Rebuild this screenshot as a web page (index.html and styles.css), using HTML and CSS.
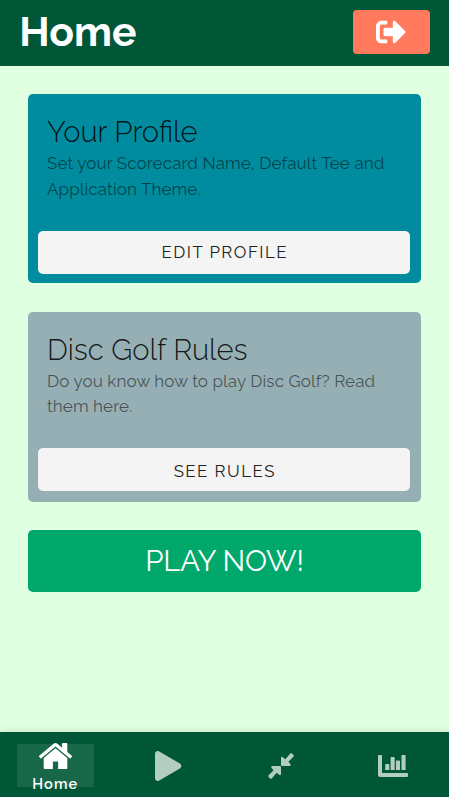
FILE: index.html
```html
<!DOCTYPE html>
<html lang="en">
<head>
<meta charset="utf-8">
<title>Home</title>
<link rel="stylesheet" href="styles.css">
</head>
<body>
<div class="app">
  <header class="header">
    <h1>Home</h1>
    <button class="logout" aria-label="Log out">
      <svg width="30" height="30" viewBox="0 0 512 512"><path d="M497 273L329 441c-15 15-41 4.500-41-17v-96H152c-13.300 0-24-10.700-24-24v-96c0-13.300 10.700-24 24-24h136V88c0-21.400 25.900-32 41-17l168 168c9.300 9.400 9.300 24.600 0 34zM192 436v-40c0-6.600-5.400-12-12-12H96c-17.700 0-32-14.300-32-32V160c0-17.700 14.300-32 32-32h84c6.600 0 12-5.400 12-12V76c0-6.600-5.400-12-12-12H96c-53 0-96 43-96 96v192c0 53 43 96 96 96h84c6.600 0 12-5.400 12-12z"/></svg>
    </button>
  </header>
  <main class="main">
    <section class="card profile">
      <h2>Your Profile</h2>
      <p>Set your Scorecard Name, Default Tee and Application Theme.</p>
      <button class="action">EDIT PROFILE</button>
    </section>
    <section class="card rules">
      <h2>Disc Golf Rules</h2>
      <p>Do you know how to play Disc Golf? Read them here.</p>
      <button class="action">SEE RULES</button>
    </section>
    <button class="play">PLAY NOW!</button>
  </main>
  <nav class="nav">
    <a class="tab active">
      <svg width="33" height="26.300" viewBox="26 253 1612 1283"><path d="M1408 992v480q0 26-19 45t-45 19H960v-384H704v384H320q-26 0-45-19t-19-45V992q0-1 .5-3t.5-3l575-474 575 474q1 2 1 6zm223-69l-62 74q-8 9-21 11h-3q-13 0-21-7L832 424 140 1001q-12 8-24 7-13-2-21-11l-62-74q-8-10-7-23.500t11-21.500l719-599q32-26 76-26t76 26l244 204V288q0-14 9-23t23-9h192q14 0 23 9t9 23v408l219 182q10 8 11 21.500t-7 23.500z"/></svg>
      <span>Home</span>
    </a>
    <a class="tab tab-play"><svg width="26.300" height="30" viewBox="0 0 448 512"><path d="M424.400 214.700L72.400 6.600C43.800-10.300 0 6.100 0 47.900V464c0 37.500 40.700 60.100 72.400 41.300l352-208c31.400-18.500 31.500-64.100 0-82.600z"/></svg></a>
    <a class="tab"><svg width="26" height="26" viewBox="0 0 26 26"><path d="M22.300.6q.8-.7 1.600 0l1.500 1.500q.7.800 0 1.600l-5 5 2 2.400q1 1.500-.7 1.900h-7.500q-1.200 0-1.200-1.200V5q.3-1.900 1.900-.8l2.400 2zM3.700 25.400q-.8.700-1.600 0L.6 23.900q-.7-.8 0-1.600l5-5-2-2.400q-1-1.500.7-1.900h7.500q1.200 0 1.200 1.200V21q-.3 1.900-1.900.8l-2.400-2z"/></svg></a>
    <a class="tab"><svg width="30" height="22" viewBox="0 0 30 22"><path d="M1 0h2q1 0 1 1v17h25q1 0 1 1v2q0 1-1 1H2q-2 0-2-2V1q0-1 1-1z"/><path d="M8 9h2.500q.8 0 .8.800V15H7.200V9.800q0-.8.800-.8zM13.400 2h2.500q.8 0 .8.800V15h-4.100V2.800q0-.8.800-.8zM18.700 5.500h2.500q.8 0 .8.800V15h-4.100V6.300q0-.8.800-.8zM24.300 0h2.500q.8 0 .8.800V15h-4.100V.8q0-.8.800-.8z"/></svg></a>
  </nav>
</div>
</body>
</html>
```
FILE: styles.css
```css
* { box-sizing: border-box; }
body { margin: 0; font-family: Raleway, Lato, sans-serif; background: #e1ffe1; }
h1, h2, p { margin: 0; }
button { border: 0; padding: 0; font-family: inherit; }
svg { display: block; fill: currentColor; flex: none; }
.app { height: 797px; display: flex; flex-direction: column; overflow: hidden; }
.header { height: 66px; padding: 10px 19.400px 0 19.200px; background: #005737; color: #fff; display: flex; justify-content: space-between; align-items: flex-start; }
h1 { font-size: 40.800px; line-height: 44px; font-weight: 700; }
.logout { width: 76.500px; height: 43.500px; border-radius: 4px; background: #ff7a5c; color: #fff; display: grid; place-items: center; }
.main { flex: 1; padding: 28px 28.500px 0 27.500px; display: flex; flex-direction: column; gap: 28.500px; }
.card { height: 189px; border-radius: 5px; padding: 20px 10.500px 9px; display: flex; flex-direction: column; }
.profile { background: #008c9e; }
.rules { height: 190px; padding-bottom: 10.500px; background: #96afb4; }
h2 { margin-left: 9px; font-size: 29.200px; line-height: 37px; font-weight: 300; color: rgba(0,0,0,.87); }
.card p { margin-left: 9px; font-size: 17px; line-height: 25.600px; letter-spacing: .11px; color: rgba(0,0,0,.54); }
.action { margin-top: auto; height: 43.500px; border-radius: 5px; background: #f4f4f4; color: #222; font-size: 16.800px; line-height: 43px; letter-spacing: 1.500px; padding-left: 1.500px; }
.rules .action { padding-top: 3px; line-height: 40px; }
.play { height: 61.500px; border-radius: 5px; background: #00a86b; color: #fff; font-size: 29.300px; font-weight: 400; line-height: 60px; letter-spacing: -.2px; padding-left: 1px; }
.nav { height: 65.500px; background: #005737; color: #b3cdc1; display: flex; align-items: center; padding: 3px 0 0; box-shadow: 0 -1px 8px rgba(0,0,0,.1); }
.tab { flex: 1; height: 43.500px; display: flex; flex-direction: column; align-items: center; justify-content: center; }
.tab-play { padding-left: 2px; }
.active { flex: none; width: 76.500px; margin: -1px 17px 0; background: #196749; color: #fff; justify-content: flex-start; }
.active svg { margin-top: -1px; }
.active span { margin-top: 6px; font-size: 14.600px; line-height: 18px; font-weight: 600; letter-spacing: 1.100px; }
```
